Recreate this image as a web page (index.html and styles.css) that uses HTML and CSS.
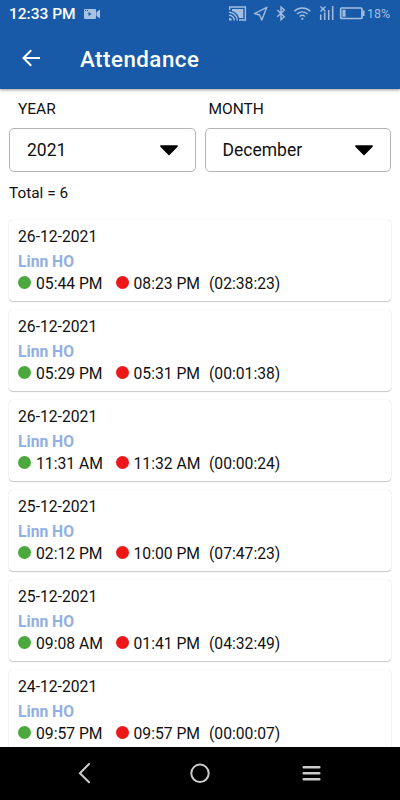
FILE: index.html
```html
<!DOCTYPE html>
<html lang="en">
<head>
    <meta charset="UTF-8">
    <meta name="viewport" content="width=device-width, initial-scale=1.0">
    <title>Attendance</title>
    <link rel="stylesheet" href="styles.css">
</head>
<body>
    <div class="screen">
        <header class="top">
            <div class="status-bar">
                <span class="clock">12:33 PM</span>
                <svg class="camera" width="16" height="12" viewBox="0 0 16 12">
                    <path fill="#a9c2e3" fill-rule="evenodd" d="M1 1h10a1 1 0 0 1 1 1v8a1 1 0 0 1-1 1H1a1 1 0 0 1-1-1V2a1 1 0 0 1 1-1zM4.500 4v4l3-2zM1 2v1h1V2zM3 2v1h1V2z"/>
                    <path fill="#a9c2e3" d="M12.500 4L16 1.500v9L12.500 8z"/>
                </svg>
                <div class="status-icons">
                    <svg width="180" height="28" viewBox="220 0 180 28" fill="none" stroke="#a3bee1" stroke-width="1.400">
                        <!-- cast -->
                        <path d="M229.700 10V7h15.700v13h-6.400"/>
                        <path fill="#a3bee1" stroke="none" d="M232 9h11.300v9H239a10 10 0 0 0-7-7z"/>
                        <path d="M229 12.200a8.300 8.300 0 0 1 8.300 8.300M229 15.200a5.300 5.300 0 0 1 5.300 5.300"/>
                        <path fill="#a3bee1" stroke="none" d="M229 17.800a2.800 2.800 0 0 1 2.800 2.800H229z"/>
                        <!-- location -->
                        <path stroke-linejoin="round" d="M266.800 7.300l-12.200 6.200 5 1.500 2.200 5z"/>
                        <!-- bluetooth -->
                        <path d="M277.300 10l7 6.700-3.300 3V7l3.300 3-7 6.700"/>
                        <!-- wifi -->
                        <path d="M294.300 11.200c4.500-4.300 11.400-4.300 16 0M297 14c3-2.800 7.600-2.800 10.600 0M299.600 16.600c1.600-1.500 3.800-1.500 5.400 0"/>
                        <circle cx="302.300" cy="18.800" r="1.100" fill="#a3bee1" stroke="none"/>
                        <!-- signal -->
                        <path d="M320.700 14.500V20M324.700 12.500V20M328.700 10V20M332.700 6V20" stroke-width="1.500"/>
                        <path d="M320.500 6.500l5 5M325.500 6.500l-5 5"/>
                        <!-- battery -->
                        <rect x="340.700" y="8" width="21.300" height="10.500" rx="1" stroke-width="1.700"/>
                        <path fill="#a3bee1" stroke="none" d="M342.500 9.800h3v7h-3zM362.500 10.500h2v5.500h-2z"/>
                    </svg>
                    <span class="battery-level">18%</span>
                </div>
            </div>
            <div class="app-bar">
                <svg class="back" width="18" height="18" viewBox="0 0 18 18">
                    <path d="M9.200 1.200L1.500 9l7.700 7.800M1.500 9H18" fill="none" stroke="#fff" stroke-width="2"/>
                </svg>
                <h1>Attendance</h1>
            </div>
        </header>

        <main class="content">
            <div class="filters">
                <div class="filter">
                    <label>YEAR</label>
                    <div class="select">
                        <span>2021</span>
                        <svg width="18" height="11" viewBox="0 0 18 11"><path d="M.3.300h17.400v1.400L9 10.500.3 1.700z"/></svg>
                    </div>
                </div>
                <div class="filter">
                    <label class="month-label">MONTH</label>
                    <div class="select">
                        <span>December</span>
                        <svg width="18" height="11" viewBox="0 0 18 11"><path d="M.3.300h17.400v1.400L9 10.500.3 1.700z"/></svg>
                    </div>
                </div>
            </div>
            <p class="total">Total = 6</p>

            <div class="list">
                <div class="card">
                    <div class="date">26-12-2021</div>
                    <div class="name">Linn HO</div>
                    <div class="times"><i class="dot in"></i><span class="time">05:44 PM</span><i class="dot out"></i><span class="time">08:23 PM</span><span>(02:38:23)</span></div>
                </div>
                <div class="card">
                    <div class="date">26-12-2021</div>
                    <div class="name">Linn HO</div>
                    <div class="times"><i class="dot in"></i><span class="time">05:29 PM</span><i class="dot out"></i><span class="time">05:31 PM</span><span>(00:01:38)</span></div>
                </div>
                <div class="card">
                    <div class="date">26-12-2021</div>
                    <div class="name">Linn HO</div>
                    <div class="times"><i class="dot in"></i><span class="time">11:31 AM</span><i class="dot out"></i><span class="time">11:32 AM</span><span>(00:00:24)</span></div>
                </div>
                <div class="card">
                    <div class="date">25-12-2021</div>
                    <div class="name">Linn HO</div>
                    <div class="times"><i class="dot in"></i><span class="time">02:12 PM</span><i class="dot out"></i><span class="time">10:00 PM</span><span>(07:47:23)</span></div>
                </div>
                <div class="card">
                    <div class="date">25-12-2021</div>
                    <div class="name">Linn HO</div>
                    <div class="times"><i class="dot in"></i><span class="time">09:08 AM</span><i class="dot out"></i><span class="time">01:41 PM</span><span>(04:32:49)</span></div>
                </div>
                <div class="card">
                    <div class="date">24-12-2021</div>
                    <div class="name">Linn HO</div>
                    <div class="times"><i class="dot in"></i><span class="time">09:57 PM</span><i class="dot out"></i><span class="time">09:57 PM</span><span>(00:00:07)</span></div>
                </div>
            </div>
        </main>

        <nav class="nav-bar">
            <svg width="20" height="20" viewBox="0 0 20 20"><path d="M10 1L.9 10.300l9.100 9"/></svg>
            <svg width="20" height="20" viewBox="0 0 20 20"><circle cx="10" cy="10.300" r="8.700"/></svg>
            <svg width="20" height="20" viewBox="0 0 20 20"><path d="M2.700 4.300h15.600M2.700 10.300h15.600M2.700 16.300h15.600" stroke-width="2.500"/></svg>
        </nav>
    </div>
</body>
</html>
```

FILE: styles.css
```css
* {
    box-sizing: border-box;
}

body {
    font-family: Roboto, sans-serif;
    margin: 0;
    background: #fff;
    color: #111;
}

.screen {
    display: flex;
    flex-direction: column;
    height: 800px;
    overflow: hidden;
}

/* Status bar and title */
.top {
    flex: none;
    height: 89px;
    background-color: #185aa8;
    color: #fff;
    box-shadow: 0 1px 3px rgba(0, 0, 0, 0.4);
}

.status-bar {
    display: flex;
    align-items: center;
    height: 28px;
    padding-left: 9px;
}

.clock {
    width: 75px;
    font-size: 15.5px;
    font-weight: 500;
    white-space: nowrap;
}

.status-icons {
    position: relative;
    margin-left: auto;
    height: 28px;
}

.status-icons svg {
    display: block;
}

.battery-level {
    position: absolute;
    left: 147px;
    top: 6px;
    font-size: 12.5px;
    line-height: 16px;
    color: #a3bee1;
}

.app-bar {
    display: flex;
    align-items: center;
    height: 59px;
    padding-left: 22px;
}

.app-bar h1 {
    margin: 2px 0 0 40px;
    font-size: 22.3px;
    font-weight: 500;
    letter-spacing: 0.5px;
}

/* Year and month */
.content {
    flex: 1;
    min-height: 0;
    overflow: hidden;
    padding: 10px 9px 0;
}

.filters {
    display: flex;
    gap: 9px;
}

.filter {
    flex: 1;
}

.filter label {
    display: block;
    height: 29px;
    padding-left: 9px;
    font-size: 15.5px;
    line-height: 21px;
}

.filter .month-label {
    padding-left: 4px;
}

.select {
    display: flex;
    align-items: center;
    justify-content: space-between;
    height: 44px;
    padding: 0 17px;
    border: 1px solid #b5b5b5;
    border-radius: 5px;
    font-size: 17.5px;
}

.total {
    margin: 11px 0 17px;
    font-size: 15.4px;
    line-height: 20px;
}

/* Attendance list */
.card {
    height: 81px;
    margin-bottom: 9px;
    padding: 7px 9px 0;
    border-radius: 4px;
    background: #fff;
    box-shadow: 0 0 1px rgba(0, 0, 0, 0.25), 0 1px 1px rgba(0, 0, 0, 0.2);
    font-size: 15.7px;
}

.date {
    height: 25px;
    line-height: 20px;
}

.name {
    height: 21px;
    line-height: 20px;
    font-weight: bold;
    color: #91b0e3;
}

.times {
    display: flex;
    align-items: center;
    height: 20px;
}

.dot {
    width: 13px;
    height: 13px;
    margin: 0 5px 2px 0;
    border-radius: 50%;
}

.in {
    background-color: #4ba83c;
}

.out {
    background-color: #ee1717;
}

.time {
    width: 79.500px;
}

.time:nth-child(4) {
    width: 75.500px;
}

/* Android navigation */
.nav-bar {
    display: flex;
    flex: none;
    justify-content: center;
    gap: 91px;
    height: 53px;
    padding-top: 16px;
    background: #000;
}

.nav-bar svg {
    fill: none;
    stroke: #ccc;
    stroke-width: 2;
    stroke-linecap: round;
    overflow: visible;
}
```
